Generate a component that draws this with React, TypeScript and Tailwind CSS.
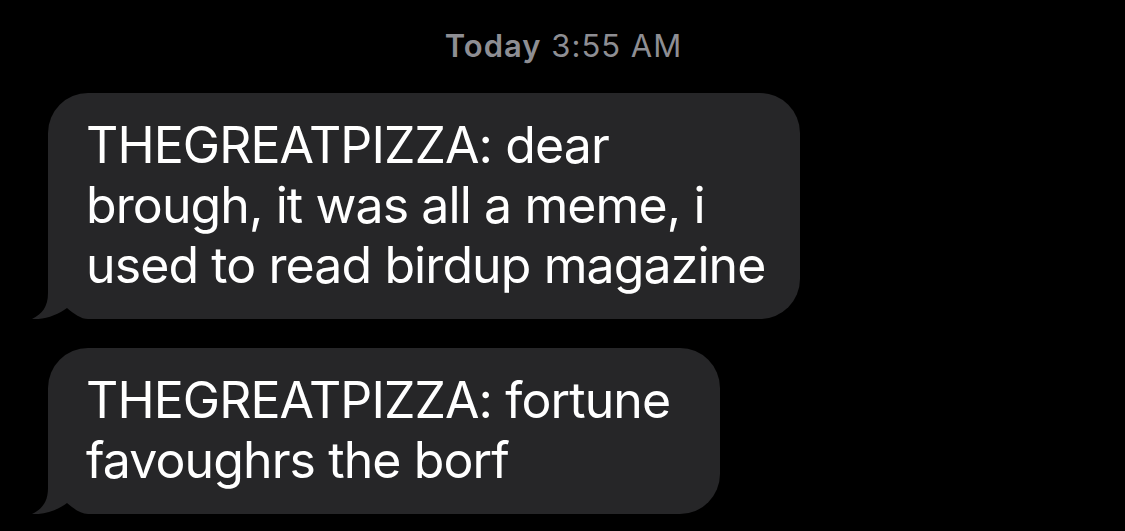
import React from 'react';

function Tail() {
  return (
    <svg
      className="absolute left-[-16px] bottom-0 w-[60px] h-[50px]"
      viewBox="0 0 60 50"
      aria-hidden
    >
      <rect x="0" y="0" width="60" height="50" fill="#000000" />
      <path
        d="M16 0 L16 24 C16 38 10 45 0 50 C12 51 26 46 35 39 C42 45 49 50 56 50 L60 50 L60 0 Z"
        fill="#262628"
      />
    </svg>
  );
}

function Bubble({ lines, width }: { lines: string[]; width: string }) {
  return (
    <div className={`relative bg-[#262628] rounded-[40px] pl-[38px] pt-[22px] pb-[24px] ${width}`}>
      <Tail />
      <div className="relative text-white text-[50px] leading-[60px] tracking-[-0.9px]">
        {lines.map((l, i) => (
          <div key={i} className="whitespace-nowrap">{l}</div>
        ))}
      </div>
    </div>
  );
}

export default function App() {
  const messages = [
    {
      lines: ['THEGREATPIZZA: dear', 'brough, it was all a meme, i', 'used to read birdup magazine'],
      width: 'w-[752px]',
    },
    {
      lines: ['THEGREATPIZZA: fortune', 'favoughrs the borf'],
      width: 'w-[672px]',
    },
  ];

  return (
    <div className="w-[1125px] h-[531px] bg-black overflow-hidden font-['Inter','Roboto',sans-serif]">
      <div className="pt-[27px] text-center text-[31px] leading-[38px] tracking-[1px] text-[#8e8e93] pl-[2px]">
        <span className="font-semibold">Today</span> 3:55 AM
      </div>
      <div className="flex flex-col gap-[29px] pl-[48px] pt-[28px]">
        {messages.map((m, i) => (
          <Bubble key={i} lines={m.lines} width={m.width} />
        ))}
      </div>
    </div>
  );
}
